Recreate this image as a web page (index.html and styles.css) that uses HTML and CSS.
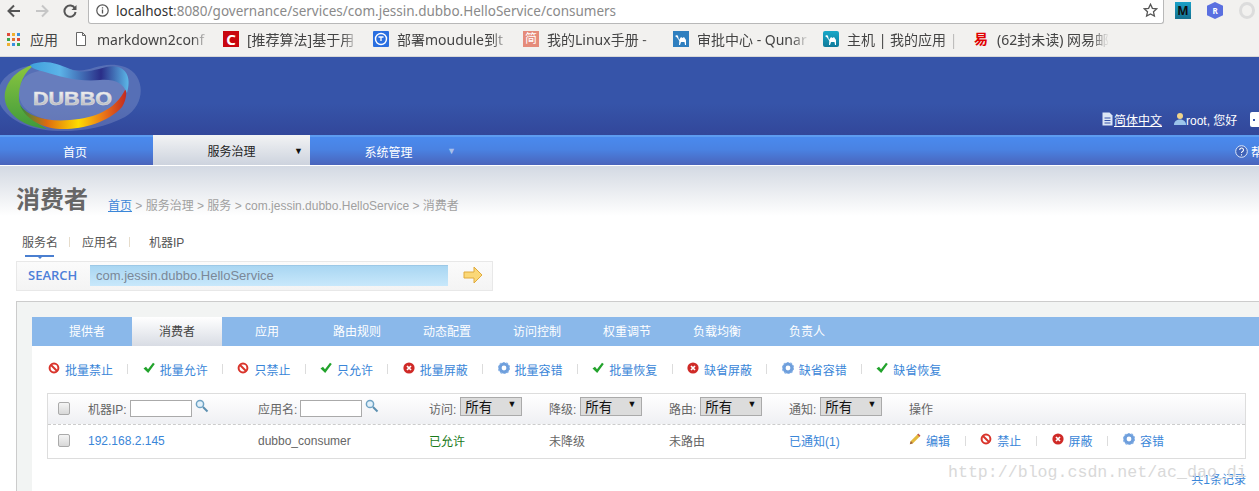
FILE: index.html
```html
<!DOCTYPE html>
<html lang="en">
<head>
    <meta charset="UTF-8">
    <meta name="viewport" content="width=device-width, initial-scale=1.0">
    <title>消费者</title>
    <link rel="stylesheet" href="styles.css">
</head>
<body>
    <svg class="defs" width="0" height="0">
        <defs>
            <linearGradient id="gGreen" x1="0" y1="0" x2="0" y2="1"><stop offset="0" stop-color="#8cc63f"/><stop offset="1" stop-color="#3f9a3c"/></linearGradient>
            <linearGradient id="gBottom" x1="0" y1="0" x2="1" y2="0"><stop offset="0" stop-color="#2f8a40"/><stop offset=".25" stop-color="#dd6a10"/><stop offset=".55" stop-color="#ffdc00"/><stop offset=".8" stop-color="#e8701a"/><stop offset="1" stop-color="#c22a20"/></linearGradient>
            <linearGradient id="gTop" x1="0" y1="0" x2="1" y2="0"><stop offset="0" stop-color="#3f9fdc"/><stop offset=".3" stop-color="#5cb4e8"/><stop offset=".72" stop-color="#2a2e88"/><stop offset="1" stop-color="#5cb8e8"/></linearGradient>
            <linearGradient id="gText" x1="0" y1="0" x2="0" y2="1"><stop offset="0" stop-color="#ffffff"/><stop offset="1" stop-color="#a8aab0"/></linearGradient>
            <linearGradient id="gTeal" x1="0" y1="0" x2="0" y2="1"><stop offset="0" stop-color="#18a8c8"/><stop offset="1" stop-color="#0f7a9a"/></linearGradient>
            <symbol id="i-ban" viewBox="0 0 12 12"><circle cx="6" cy="6" r="4.4" fill="none" stroke="#d9342b" stroke-width="2"/><path d="M3 3l6 6" stroke="#d9342b" stroke-width="2"/></symbol>
            <symbol id="i-check" viewBox="0 0 12 12"><path d="M0.5 6.5L3 4.8 5 7.2 10 0.8 11.8 2 5.2 11z" fill="#22a32c"/></symbol>
            <symbol id="i-x" viewBox="0 0 12 12"><circle cx="6" cy="6" r="5.6" fill="#cf2a27"/><path d="M4 4l4 4M8 4l-4 4" stroke="#fff" stroke-width="1.7"/></symbol>
            <symbol id="i-gear" viewBox="0 0 12 12"><circle cx="6" cy="6" r="4" fill="none" stroke="#6f9fdc" stroke-width="3.2"/><circle cx="6" cy="6" r="5.6" fill="none" stroke="#8db6e8" stroke-width="1.2" stroke-dasharray="2 1.5"/></symbol>
            <symbol id="i-pencil" viewBox="0 0 12 12"><path d="M0.8 11.2L1.8 8 8.8 1 11 3.2 4 10.2z" fill="#e4b93c"/><path d="M0.8 11.2L1.8 8 4 10.2z" fill="#a0603c"/><path d="M8.8 1L11 3.2" stroke="#c0504d" stroke-width="1.4"/></symbol>
            <symbol id="i-search" viewBox="0 0 14 14"><circle cx="5" cy="5" r="3.6" fill="#e3f1fa" stroke="#6fa3c4" stroke-width="1.5"/><path d="M8 8l4.5 4.5" stroke="#5b8fb0" stroke-width="2"/></symbol>
            <symbol id="i-camel" viewBox="0 0 16 16"><rect width="16" height="16" fill="#2f7fbf"/><path d="M2 5l2-1 1 1 1 4 2-3 1.500 1 1.500-1 2 3v5h-1l-.5-3H8l-1 3H6l.3-4L4 6.500z" fill="#fff"/></symbol>
            <symbol id="i-camel2" viewBox="0 0 16 16"><rect width="16" height="16" rx="2" fill="url(#gTeal)"/><path d="M2 5l2-1 1 1 1 4 2-3 1.500 1 1.500-1 2 3v5h-1l-.5-3H8l-1 3H6l.3-4L4 6.500z" fill="#fff"/></symbol>
        </defs>
    </svg>

    <div class="browser">
        <div class="browser-top">
            <svg class="nav-ico" width="14" height="14" viewBox="0 0 14 14"><path d="M13 7H2M7 1.500L1.500 7 7 12.500" fill="none" stroke="#555" stroke-width="2"/></svg>
            <svg class="nav-ico" width="14" height="14" viewBox="0 0 14 14"><path d="M1 7h11M7 1.500L12.500 7 7 12.500" fill="none" stroke="#c6c6c6" stroke-width="2"/></svg>
            <svg class="nav-ico" width="14" height="14" viewBox="0 0 14 14"><path d="M12 4.500A5.600 5.600 0 1 0 12.600 8" fill="none" stroke="#555" stroke-width="2"/><path d="M13.500 1v5h-5z" fill="#555"/></svg>
            <div class="urlbar">
                <svg width="13" height="13" viewBox="0 0 13 13"><circle cx="6.500" cy="6.500" r="5.700" fill="none" stroke="#555" stroke-width="1.200"/><path d="M6.500 5.600v4M6.500 3.200v1.400" stroke="#555" stroke-width="1.300"/></svg>
                <span class="url"><b>localhost</b>:8080/governance/services/com.jessin.dubbo.HelloService/consumers</span>
                <svg class="star" width="15" height="15" viewBox="0 0 15 15"><path d="M7.500 1.300l1.900 4 4.300.5-3.200 3 .9 4.300-3.900-2.200-3.900 2.200.9-4.300-3.200-3 4.300-.5z" fill="none" stroke="#555" stroke-width="1.300"/></svg>
            </div>
            <div class="exts">
                <span class="ext-m">M</span>
                <span class="ext-r">R</span>
                <span class="ext-o"></span>
            </div>
        </div>
        <div class="bookmarks">
            <div class="bm bm-apps">
                <span class="apps-grid"><i class="c1"></i><i class="c2"></i><i class="c3"></i><i class="c4"></i><i class="c5"></i><i class="c6"></i><i class="c7"></i><i class="c8"></i><i class="c9"></i></span>
                <span>应用</span>
            </div>
            <div class="bm">
                <svg width="16" height="16" viewBox="0 0 16 16"><path d="M3.500 1.500h6l3 3v10h-9zM9.500 1.500v3h3" fill="#fff" stroke="#666"/></svg>
                <span class="bm-text">markdown2conf</span>
            </div>
            <div class="bm">
                <span class="fav fav-c">C</span>
                <span class="bm-text">[推荐算法]基于用</span>
            </div>
            <div class="bm">
                <svg width="16" height="16" viewBox="0 0 16 16"><rect width="16" height="16" rx="1" fill="#2a6fe0"/><circle cx="8" cy="8" r="5.500" fill="none" stroke="#fff" stroke-width="1.400"/><path d="M5.500 6h5M8 6v4" stroke="#fff" stroke-width="1.300"/></svg>
                <span class="bm-text">部署moudule到t</span>
            </div>
            <div class="bm">
                <span class="fav fav-jian">简</span>
                <span class="bm-text">我的Linux手册 -</span>
            </div>
            <div class="bm">
                <svg width="16" height="16"><use href="#i-camel"/></svg>
                <span class="bm-text">审批中心 - Qunar</span>
            </div>
            <div class="bm">
                <svg width="16" height="16"><use href="#i-camel2"/></svg>
                <span class="bm-text">主机 | 我的应用 |</span>
            </div>
            <div class="bm">
                <span class="fav fav-163">易</span>
                <span class="bm-text">(62封未读) 网易邮</span>
            </div>
        </div>
    </div>

    <header class="site-header">
        <svg class="logo" width="160" height="80" viewBox="0 0 160 80">
            <path d="M0 30C10 10 40 5 70 14 90 20 100 4 125 12 146 20 146 50 125 62 95 78 50 80 25 70 5 62-8 45 0 30Z" fill="#fff" opacity=".16"/>
            <path d="M25 22C40 10 60 18 80 22 100 26 115 18 124 28 132 42 118 58 95 64 70 70 38 68 24 52 16 42 18 30 25 22Z" fill="#fff" opacity=".1"/>
            <path d="M36 9C15 14 3 30 5 45 7 60 25 72 47 74 33 66 20 55 19 45 18 30 24 16 36 9Z" fill="url(#gGreen)"/>
            <path d="M20 50C28 62 48 67 70 65 95 63 115 55 125 35 127 33 127 45 122 52 108 68 80 75 60 74 40 73 24 62 20 50Z" fill="url(#gBottom)"/>
            <path d="M30 10C45 4 55 8 70 14 90 22 105 8 118 12 130 16 130 28 127 38 123 28 115 24 100 25 80 27 60 22 45 17 38 15 32 14 30 10Z" fill="url(#gTop)"/>
            <text class="logo-text" x="33" y="50" textLength="79" lengthAdjust="spacingAndGlyphs" fill="url(#gText)">DUBBO</text>
        </svg>
        <div class="user-links">
            <svg width="11" height="14" viewBox="0 0 11 14"><path d="M.5.5h7l3 3v10H.5z" fill="#dce6f5"/><path d="M2.500 6h6M2.500 8.500h6M2.500 11h6" stroke="#3653a8"/></svg>
            <a class="lang" href="#">简体中文</a>
            <svg class="user-ico" width="12" height="14" viewBox="0 0 12 14"><circle cx="6" cy="4" r="3" fill="#f0d48a"/><path d="M0 13c0-4 3-5.500 6-5.500s6 1.500 6 5.500z" fill="#9cc4ea"/></svg>
            <span class="hello">root, 您好</span>
            <span class="logout-ico"></span>
        </div>
    </header>

    <nav class="main-nav">
        <a class="nav-item nav-home" href="#">首页</a>
        <a class="nav-item nav-active" href="#">服务治理<i>▼</i></a>
        <a class="nav-item nav-sys" href="#">系统管理<i>▼</i></a>
        <a class="nav-help" href="#">
            <svg width="13" height="13" viewBox="0 0 13 13"><circle cx="6.500" cy="6.500" r="5.800" fill="#3f62b8" stroke="#dfe8f8" stroke-width="1"/><path d="M4.700 5a1.900 1.900 0 1 1 2.600 1.700c-.6.300-.8.600-.8 1.300M6.500 9.200v1.200" fill="none" stroke="#fff" stroke-width="1.100"/></svg>
            帮助
        </a>
    </nav>

    <main class="content">
        <div class="title-row">
            <h1>消费者</h1>
            <p class="crumbs"><a href="#">首页</a> &gt; 服务治理 &gt; 服务 &gt; com.jessin.dubbo.HelloService &gt; 消费者</p>
        </div>

        <div class="search-tabs">
            <span class="st st-1">服务名</span>
            <s class="st-sep"></s>
            <span class="st">应用名</span>
            <s class="st-sep st-sep-wide"></s>
            <span class="st">机器IP</span>
        </div>
        <div class="search-box">
            <span class="search-label">SEARCH</span>
            <input class="search-input" type="text" value="com.jessin.dubbo.HelloService">
            <svg width="20" height="18" viewBox="0 0 20 18"><path d="M1 6h10V1l8 8-8 8v-5H1z" fill="#fbd877" stroke="#e0aa3c"/></svg>
        </div>

        <section class="panel">
            <div class="panel-inner">
                <div class="tabs">
                    <a class="tab tab-first" href="#">提供者</a>
                    <a class="tab tab-active" href="#">消费者</a>
                    <a class="tab" href="#">应用</a>
                    <a class="tab" href="#">路由规则</a>
                    <a class="tab" href="#">动态配置</a>
                    <a class="tab" href="#">访问控制</a>
                    <a class="tab" href="#">权重调节</a>
                    <a class="tab" href="#">负载均衡</a>
                    <a class="tab" href="#">负责人</a>
                </div>

                <div class="actions">
                    <a href="#"><svg><use href="#i-ban"/></svg>批量禁止</a><s></s>
                    <a href="#"><svg><use href="#i-check"/></svg>批量允许</a><s></s>
                    <a href="#"><svg><use href="#i-ban"/></svg>只禁止</a><s></s>
                    <a href="#"><svg><use href="#i-check"/></svg>只允许</a><s></s>
                    <a href="#"><svg><use href="#i-x"/></svg>批量屏蔽</a><s></s>
                    <a href="#"><svg><use href="#i-gear"/></svg>批量容错</a><s></s>
                    <a href="#"><svg><use href="#i-check"/></svg>批量恢复</a><s></s>
                    <a href="#"><svg><use href="#i-x"/></svg>缺省屏蔽</a><s></s>
                    <a href="#"><svg><use href="#i-gear"/></svg>缺省容错</a><s></s>
                    <a href="#"><svg><use href="#i-check"/></svg>缺省恢复</a>
                </div>

                <div class="grid">
                    <div class="grid-row grid-head">
                        <span class="cb"></span>
                        <label>机器IP:<input type="text"><svg class="mag"><use href="#i-search"/></svg></label>
                        <label>应用名:<input type="text"><svg class="mag"><use href="#i-search"/></svg></label>
                        <label>访问:<span class="sel">所有<i>▼</i></span></label>
                        <label>降级:<span class="sel">所有<i>▼</i></span></label>
                        <label>路由:<span class="sel">所有<i>▼</i></span></label>
                        <label>通知:<span class="sel">所有<i>▼</i></span></label>
                        <span>操作</span>
                    </div>
                    <div class="grid-row grid-body">
                        <span class="cb"></span>
                        <a href="#">192.168.2.145</a>
                        <span>dubbo_consumer</span>
                        <span class="ok">已允许</span>
                        <span>未降级</span>
                        <span>未路由</span>
                        <a href="#">已通知(1)</a>
                        <span class="ops">
                            <a href="#"><svg><use href="#i-pencil"/></svg>编辑</a><s></s>
                            <a href="#"><svg><use href="#i-ban"/></svg>禁止</a><s></s>
                            <a href="#"><svg><use href="#i-x"/></svg>屏蔽</a><s></s>
                            <a href="#"><svg><use href="#i-gear"/></svg>容错</a>
                        </span>
                    </div>
                </div>

                <div class="pager">共1条记录</div>
            </div>
        </section>
    </main>

    <div class="watermark">http://blog.csdn.net/ac_dao_di</div>
</body>
</html>
```

FILE: styles.css
```css
* {
    box-sizing: border-box;
}

html, body {
    margin: 0;
    padding: 0;
    height: 491px;
    overflow: hidden;
}

body {
    position: relative;
    font-family: "Liberation Sans", "Noto Sans CJK SC", sans-serif;
    font-size: 12px;
    color: #666;
    background: #fff;
}

a {
    text-decoration: none;
    color: #3a86d8;
}

.defs {
    position: absolute;
}

/* browser chrome */
.browser {
    height: 57px;
    background: #f2f1ef;
    border-bottom: 1px solid #d8d8d8;
    font-family: "Noto Sans", "Noto Sans CJK SC", sans-serif;
}

.browser-top {
    height: 24px;
    display: flex;
    align-items: flex-start;
    padding-left: 7px;
}

.nav-ico {
    margin: 4px 14px 0 0;
    flex: none;
}

.urlbar {
    width: 1076px;
    height: 24px;
    margin-left: -3px;
    background: #fff;
    border: 1px solid #b8b8b8;
    border-top: none;
    border-radius: 0 0 3px 3px;
    display: flex;
    align-items: center;
    padding: 0 5px 2px 7px;
}

.url {
    margin-left: 7px;
    font-size: 13.500px;
    color: #8a8a8a;
    white-space: nowrap;
}

.url b {
    font-weight: 400;
    color: #333;
}

.star {
    margin-left: auto;
}

.exts {
    display: flex;
    gap: 16px;
    margin-left: 11px;
    padding-top: 2px;
}

.exts span {
    width: 16px;
    height: 17px;
    display: flex;
    align-items: center;
    justify-content: center;
    font-weight: 700;
}

.ext-m {
    background: linear-gradient(#1aa0c8, #14708f);
    color: #111;
    font-size: 12px;
}

.ext-r {
    background: #5a6fe0;
    color: #fff;
    font-size: 8px;
    clip-path: polygon(50% 0, 100% 22%, 100% 78%, 50% 100%, 0 78%, 0 22%);
}

.ext-o {
    border: 3px solid #dcdcdc;
    border-radius: 50%;
}

.bookmarks {
    height: 32px;
    display: flex;
    align-items: center;
    padding: 0 0 2px 7px;
}

.bm {
    width: 150px;
    display: flex;
    align-items: center;
    gap: 8px;
    font-size: 14px;
    color: #444;
    flex: none;
    white-space: nowrap;
}

.bm svg {
    flex: none;
}

.bm-apps {
    width: 66px;
    gap: 10px;
}

.bm-text {
    width: 112px;
    overflow: hidden;
    -webkit-mask-image: linear-gradient(to right, #000 85%, transparent);
    mask-image: linear-gradient(to right, #000 85%, transparent);
}

.apps-grid {
    width: 13px;
    height: 13px;
    display: grid;
    grid-template-columns: repeat(3, 3px);
    grid-auto-rows: 3px;
    gap: 2px;
}

.c1, .c6 { background: #e04a3a; }
.c2, .c7 { background: #f0b030; }
.c3, .c8 { background: #3a90e0; }
.c4, .c9 { background: #3aa850; }
.c5 { background: #e07030; }

.fav {
    width: 16px;
    height: 16px;
    flex: none;
    display: flex;
    align-items: center;
    justify-content: center;
    font-size: 12px;
    line-height: 1;
}

.fav-c {
    background: #c9060f;
    color: #fff;
    font-weight: 700;
    font-size: 15px;
}

.fav-jian {
    background: #e58b7a;
    color: #fff;
}

.fav-163 {
    color: #e00000;
    font-weight: 700;
    font-size: 14px;
}

/* site header */
.site-header {
    height: 78px;
    display: flex;
    justify-content: space-between;
    align-items: flex-end;
    background: linear-gradient(#3654a9 0%, #3654a9 60%, #32479a 100%);
    color: #fff;
    position: relative;
}

.logo {
    align-self: flex-start;
    margin-top: -2px;
    flex: none;
}

.logo-text {
    font-family: "Liberation Sans", sans-serif;
    font-weight: 700;
    font-size: 18px;
    stroke: #dcdde0;
    stroke-width: .5px;
}

.user-links {
    display: flex;
    align-items: center;
    height: 16px;
    margin: 0 -6px 8px 0;
    width: 163px;
    flex: none;
}

.lang {
    margin-left: 1px;
    color: #fff;
    text-decoration: underline;
}

.user-ico {
    margin-left: 12px;
}

.hello {
    font-size: 12px;
}

.logout-ico {
    position: relative;
    width: 14px;
    height: 15px;
    margin-left: 13px;
    background: #fff;
    border-radius: 2px;
    flex: none;
}

.logout-ico::after {
    content: "";
    position: absolute;
    left: 3px;
    top: 7px;
    width: 2px;
    height: 2px;
    background: #3653a8;
}

/* main nav */
.main-nav {
    height: 31px;
    display: flex;
    background: linear-gradient(#4a8aee 0%, #4a82e2 45%, #4a64bb 100%);
    border-top: 2px solid #5d9cf0;
    border-bottom: 1px solid #fff;
    position: relative;
    color: #fff;
}

.nav-item {
    position: relative;
    color: #fff;
    display: flex;
    align-items: center;
    justify-content: center;
    font-size: 12px;
    flex: none;
}

.nav-item i {
    position: absolute;
    top: 9px;
    font-style: normal;
    font-size: 9px;
}

.nav-home {
    width: 153px;
    padding-right: 3px;
}

.nav-active {
    width: 157px;
    height: 30px;
    margin-top: -2px;
    color: #222;
    background: linear-gradient(#f2f3f4, #cdd3de);
}

.nav-active i {
    top: 11px;
    right: 7px;
    color: #111;
}

.nav-sys {
    width: 157px;
}

.nav-sys i {
    right: 11px;
    color: #a8c0ea;
}

.nav-help {
    margin-left: auto;
    margin-right: -16px;
    display: flex;
    align-items: center;
    gap: 3px;
    color: #fff;
    white-space: nowrap;
}

/* page content */
.content {
    padding: 19px 0 0 16px;
    background: linear-gradient(#d3d9e3 0, #eef0f3 30px, #fff 50px);
    height: 335px;
}

.title-row {
    display: flex;
    align-items: center;
    height: 30px;
}

h1 {
    margin: 0;
    font-size: 24px;
    line-height: 30px;
    font-weight: 700;
    color: #666;
}

.crumbs {
    margin: 8px 0 0 20px;
    color: #a0a0a0;
    font-size: 12px;
}

.crumbs a {
    text-decoration: underline;
}

.search-tabs {
    display: flex;
    height: 25px;
    margin-top: 14px;
    padding-left: 6px;
    color: #555;
    align-items: center;
}

.st {
    position: relative;
}

.st-1::after {
    content: "";
    position: absolute;
    left: 3px;
    right: 4px;
    bottom: -7px;
    height: 2px;
    background: #4a7fd0;
}

.st-1::before {
    content: "";
    position: absolute;
    left: 16px;
    bottom: -9px;
    border: 2px solid transparent;
    border-top-color: #4a7fd0;
    border-bottom: none;
}

.st-sep {
    width: 1px;
    height: 10px;
    margin: 0 12px 0 11px;
    background: #e6dccb;
}

.st-sep-wide {
    margin-right: 19px;
}

.search-box {
    width: 477px;
    height: 30px;
    margin-top: 7px;
    display: flex;
    align-items: center;
    background: linear-gradient(#fbfbfb, #f4f4f4);
    border: 1px solid #e8e8e8;
    padding: 0 0 2px 11px;
}

.search-label {
    width: 62px;
    flex: none;
    color: #4d7fd9;
    font-family: "Open Sans", sans-serif;
    font-weight: 600;
    font-size: 13px;
}

.search-input {
    width: 358px;
    height: 21px;
    flex: none;
    border: none;
    border-top: 1px solid #9cc8e6;
    background: linear-gradient(#a9d6f2, #c8e8fb);
    color: #7a8898;
    font: 13px "Liberation Sans", sans-serif;
    padding: 0 6px;
    margin-right: 15px;
}

.panel {
    margin: 10px -16px 0 0;
    height: 200px;
    background: #f2f4f3;
    border: 1px solid #ccc;
    border-right: none;
    padding: 15px 0 0 15px;
}

.panel-inner {
    background: #fff;
    height: 185px;
}

.tabs {
    display: flex;
    height: 29px;
    padding-bottom: 2px;
    background: #8ab8ea;
}

.tab {
    width: 90px;
    flex: none;
    display: flex;
    align-items: center;
    justify-content: center;
    color: #fff;
}

.tab-first {
    width: 100px;
    padding-left: 10px;
}

.tab-active {
    color: #444;
    height: 29px;
    background: linear-gradient(#fff, #d8dce4);
    padding-bottom: 2px;
}

.actions {
    display: flex;
    align-items: center;
    height: 16px;
    margin-top: 15px;
    padding-left: 16px;
}

.actions a, .ops a {
    display: flex;
    align-items: center;
    gap: 5px;
    white-space: nowrap;
}

.actions svg, .ops svg {
    width: 12px;
    height: 12px;
    margin-top: -3px;
    flex: none;
}

.actions s, .ops s {
    width: 1px;
    height: 10px;
    margin: 0 14.350px;
    flex: none;
    background: #dcdcdc;
}

.ops s {
    margin: 0 14.650px;
}

.grid {
    width: 1199px;
    height: 66px;
    margin: 16px 0 0 15px;
    border: 1px solid #ddd;
}

.grid-row {
    display: grid;
    grid-template-columns: 30px 170px 171px 120px 120px 120px 120px 1fr;
    align-items: center;
    padding-left: 10px;
}

.grid-head {
    height: 31px;
    padding-bottom: 2px;
    background: linear-gradient(#fff, #eff0f3);
    border-bottom: 1px dashed #ccc;
}

.grid-head label {
    display: flex;
    align-items: center;
    font-size: 12px;
}

.grid-body {
    height: 33px;
    padding-bottom: 2px;
}

.cb {
    width: 12px;
    height: 13px;
    border: 1px solid #aaa;
    border-radius: 2px;
    background: linear-gradient(#f4f4f4, #d8d8d8);
}

.grid-head input {
    width: 62px;
    height: 17px;
    margin-left: 3px;
    padding: 0;
    border: 1px solid #aaa;
    background: #fff;
}

.mag {
    width: 14px;
    height: 14px;
    margin: -4px 0 0 3px;
}

.sel {
    position: relative;
    width: 62px;
    height: 19px;
    margin: -3px 0 0 4px;
    padding-left: 4px;
    border: 1px solid #aaa;
    background: #dcdcdc;
    color: #111;
    font-size: 13.500px;
    line-height: 19px;
}

.sel i {
    position: absolute;
    right: 5px;
    top: -3px;
    font-style: normal;
    font-size: 9px;
}

.ok {
    color: #1a7a1a;
}

.ops {
    display: flex;
    align-items: center;
}

.pager {
    width: 1214px;
    margin-top: 11px;
    text-align: right;
    color: #3a86d8;
}

.watermark {
    position: absolute;
    left: 948px;
    top: 463px;
    color: #d9d9d9;
    font-family: "Liberation Mono", monospace;
    font-size: 16.600px;
    white-space: nowrap;
}
```
